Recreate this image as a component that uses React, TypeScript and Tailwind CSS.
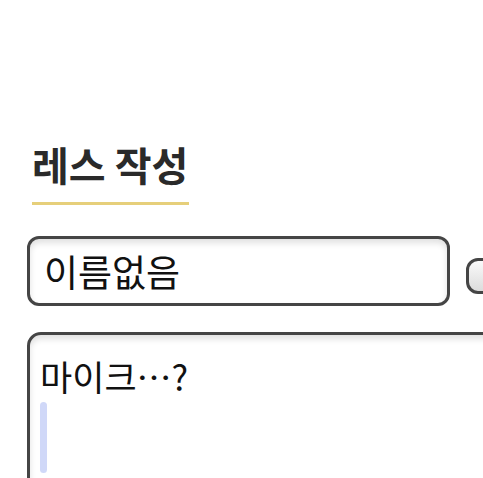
import React from "react";

const ko = { fontFamily: '"Noto Sans CJK KR", "Noto Sans", sans-serif' };

export default function App() {
  return (
    <div className="w-[483px] h-[478px] overflow-hidden bg-white" style={ko}>
      <div className="pl-[27px] pt-[140px]">
        <div className="pl-[5px]">
          <h2 className="inline-block text-[40px] leading-[48px] font-bold text-[#2a2a2a]">
            레스 작성
          </h2>
          <div className="mt-[14px] h-[3px] w-[157px] bg-[#e6cf7a]" />
        </div>

        <div className="mt-[31px] flex items-start gap-[16px] w-[600px]">
          <div className="w-[423px] h-[70px] shrink-0 rounded-[12px] border-[3px] border-[#454545] bg-white shadow-[inset_0_4px_6px_rgba(0,0,0,0.12)] flex items-center pl-[14px]">
            <span className="text-[37px] leading-none text-[#111]">이름없음</span>
          </div>
          <div className="mt-[22px] w-[80px] h-[36px] shrink-0 rounded-[12px] border-[3px] border-[#454545] bg-gradient-to-b from-[#fafafa] to-[#dcdcdc]" />
        </div>

        <div className="mt-[26px] w-[520px] h-[220px] rounded-[14px] border-[3px] border-[#454545] bg-white shadow-[inset_0_4px_6px_rgba(0,0,0,0.12)] pl-[10px] pt-[20px]">
          <div className="text-[35px] leading-[42px] text-[#111]">마이크…?</div>
          <div className="mt-[5px] w-[7px] h-[71px] rounded-full bg-[#d0d8f8]" />
        </div>
      </div>
    </div>
  );
}
